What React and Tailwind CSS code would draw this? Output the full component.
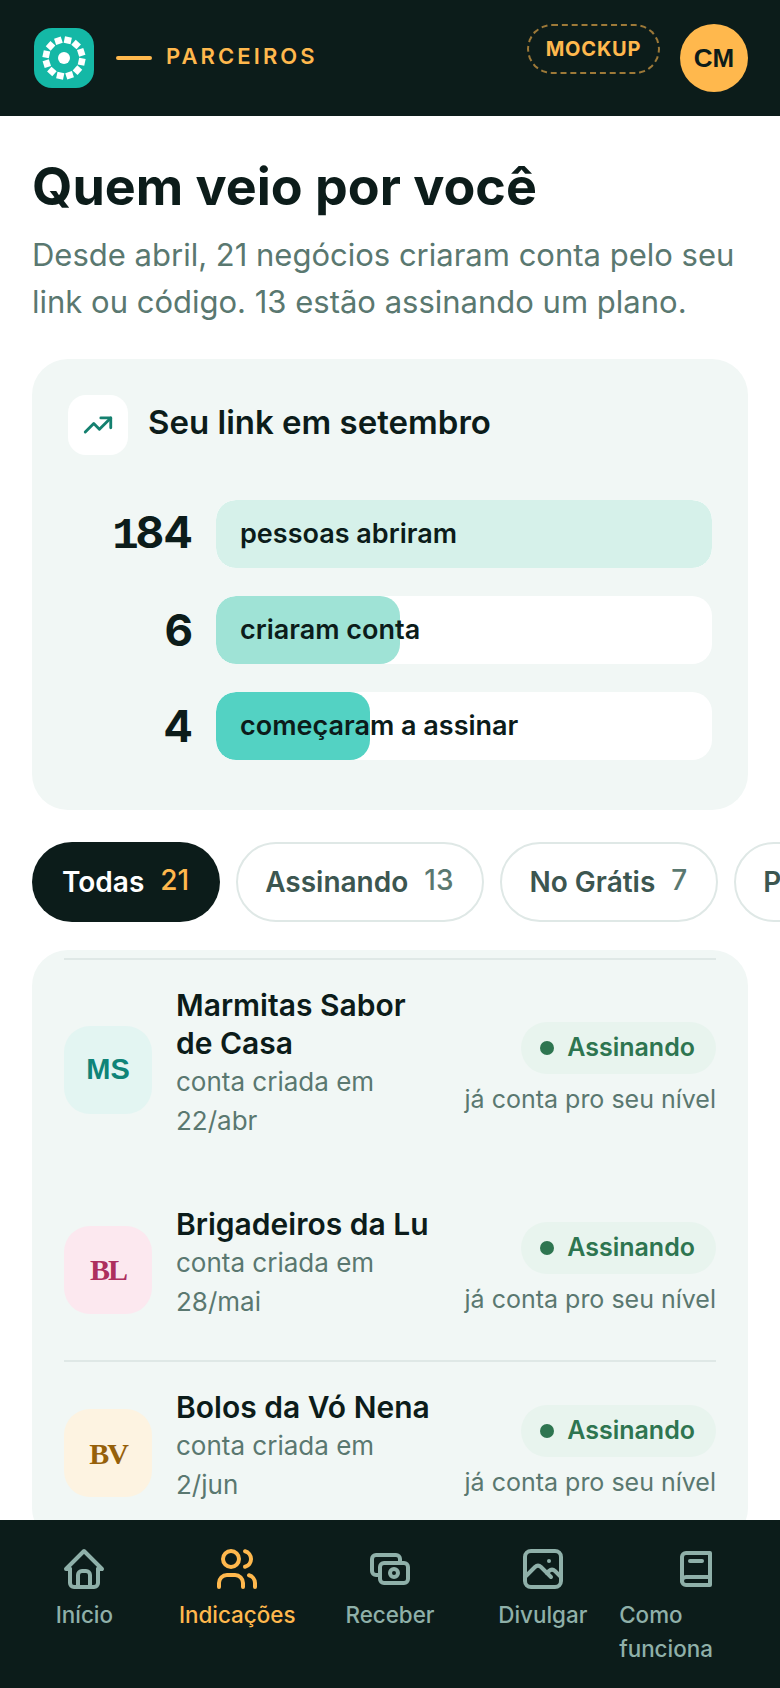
import { TbHome, TbUsers, TbCash, TbPhoto, TbBook2, TbTrendingUp } from "react-icons/tb";

const sans = "font-['Inter',sans-serif]";

function Logo() {
  const segs = Array.from({ length: 12 }, (_, i) => i * 30 + 12);
  return (
    <svg width="60" height="60" viewBox="0 0 60 60" className="shrink-0">
      <rect width="60" height="60" rx="18" fill="#14b8a6" />
      <circle cx="30" cy="30" r="6" fill="#fff" />
      {segs.map((a) => (
        <rect key={a} x="26.5" y="8.6" width="7" height="6.6" fill="#fff" transform={`rotate(${a} 30 30)`} />
      ))}
    </svg>
  );
}

function Bar({ value, lead, label, width, fill }) {
  return (
    <div className="flex items-center gap-6">
      <div className="w-[124px] text-right text-[44px] font-bold leading-none tracking-[-1px] text-[#0c1c1a]">
        {lead && <span className="font-['Liberation_Mono',monospace] tracking-[-3px]">{lead}</span>}
        {value}
      </div>
      <div className="relative h-[68px] flex-1 overflow-hidden rounded-[20px] bg-white">
        <div className="h-full rounded-[20px]" style={{ width, backgroundColor: fill }} />
        <span className="absolute inset-y-0 left-6 flex items-center text-[27px] font-semibold text-[#0c1c1a]">{label}</span>
      </div>
    </div>
  );
}

function Pill({ label, n, active }) {
  return (
    <div className={`flex h-[80px] shrink-0 items-center gap-4 rounded-full text-[28px] font-semibold ${active ? "bg-[#0c1c1a] pl-[30px] pr-[31px] text-white" : "border-2 border-[#dfe8e6] bg-white pl-[27px] pr-[29px] text-[#3c5650]"}`}>
      <span>{label}</span>
      <span className={`-translate-y-0.5 text-[28px] font-medium ${active ? "text-[#ffb84d]" : "text-[#5a7870]"}`}>{n}</span>
    </div>
  );
}

function Row({ initials, bg, fg, mono, name, date, border, cls }) {
  return (
    <div className={`flex items-center gap-6 ${border ? "border-t-2 border-[#dfe8e6]" : ""} ${cls}`}>
      <div className={`flex h-[88px] w-[88px] shrink-0 items-center justify-center rounded-[26px] font-bold ${mono}`} style={{ backgroundColor: bg, color: fg }}>
        {initials}
      </div>
      <div className="w-[264px] shrink-0 pb-[14px]">
        <div className="text-[30px] font-semibold leading-[38px] text-[#0c1c1a]">{name}</div>
        <div className="text-[26px] leading-[39px] text-[#5a7870]">conta criada em {date}</div>
      </div>
      <div className="flex flex-1 flex-col items-end gap-1.5">
        <div className="flex h-[52px] items-center gap-[13px] rounded-full bg-[#e8f4ee] pl-[19px] pr-[21px] text-[25px] font-semibold text-[#2e7550]">
          <span className="h-3.5 w-3.5 rounded-full bg-[#2e7550]" />
          Assinando
        </div>
        <div className="whitespace-nowrap text-[25px] leading-[38px] text-[#5a7870]">já conta pro seu nível</div>
      </div>
    </div>
  );
}

function NavItem({ icon: Icon, label, active }) {
  return (
    <div className={`flex flex-col items-center gap-[5px] ${active ? "text-[#ffb84d]" : "text-[#8fb0a9]"}`}>
      <Icon size={48} />
      <span className="text-[22.4px] font-medium leading-[34px]">{label}</span>
    </div>
  );
}

export default function App() {
  return (
    <div className={`relative flex h-[1688px] w-[780px] flex-col overflow-hidden bg-white ${sans}`}>
      <header className="flex h-[116px] shrink-0 items-center bg-[#0c1c1a] pl-[34px] pr-8">
        <Logo />
        <span className="ml-[22px] h-1 w-9 rounded-full bg-[#ffb84d]" />
        <span className="ml-[14px] -translate-y-0.5 text-[22px] font-semibold tracking-[0.14em] text-[#ffb84d]">PARCEIROS</span>
        <div className="ml-auto flex items-start gap-5">
          <div className="flex h-[50px] w-[133px] items-center justify-center rounded-full border-2 border-dashed border-[#ffb84d]/60 text-[20px] font-bold tracking-[0.04em] text-[#ffb84d]">MOCKUP</div>
          <div className="flex h-[68px] w-[68px] items-center justify-center rounded-full bg-[#ffb84d] font-['Liberation_Sans',sans-serif] text-[26px] font-bold text-[#0c1c1a]">CM</div>
        </div>
      </header>

      <main className="min-h-0 flex-1 overflow-hidden">
        <div className="px-8 pt-[37px]">
          <h1 className="text-[52px] font-bold leading-[68px] text-[#0c1c1a]">Quem veio por você</h1>
          <p className="mt-[10px] text-[31px] leading-[47px] text-[#5a7870]">Desde abril, 21 negócios criaram conta pelo seu link ou código. 13 estão assinando um plano.</p>
        </div>

        <section className="mx-8 mt-[34px] rounded-[36px] bg-[#f1f7f5] px-9 pb-[50px] pt-9">
          <div className="flex items-center gap-5">
            <div className="flex h-[60px] w-[60px] items-center justify-center rounded-[18px] bg-white text-[#14806f]">
              <TbTrendingUp size={34} />
            </div>
            <div className="-translate-y-0.5 text-[33px] font-semibold text-[#0c1c1a]">Seu link em setembro</div>
          </div>
          <div className="mt-[45px] flex flex-col gap-7">
            <Bar lead="1" value="84" label="pessoas abriram" width="100%" fill="#d6f1ea" />
            <Bar value="6" label="criaram conta" width="37.1%" fill="#9fe3d6" />
            <Bar value="4" label="começaram a assinar" width="31%" fill="#53d2c3" />
          </div>
        </section>

        <div className="mt-8 flex gap-4 pl-8">
          <Pill label="Todas" n="21" active />
          <Pill label="Assinando" n="13" />
          <Pill label="No Grátis" n="7" />
          <Pill label="Pendentes" n="1" />
        </div>

        <section className="mx-8 mt-7 rounded-[36px] bg-[#f1f7f5] px-8 pt-2">
          <Row border cls="h-[221px]" initials="MS" bg="#e3f5f2" fg="#0f8478" mono="font-['Liberation_Sans',sans-serif] text-[29px]" name="Marmitas Sabor de Casa" date="22/abr" />
          <Row cls="h-[181px]" initials="BL" bg="#fce8ef" fg="#ad2f5e" mono="font-['Liberation_Serif',serif] text-[30px] tracking-[-2px]" name="Brigadeiros da Lu" date="28/mai" />
          <Row border cls="h-[184px]" initials="BV" bg="#fdf3e1" fg="#96600a" mono="font-['Liberation_Serif',serif] text-[30px] tracking-[-2px]" name="Bolos da Vó Nena" date="2/jun" />
        </section>
      </main>

      <nav className="grid h-[168px] shrink-0 grid-cols-5 bg-[#0c1c1a] px-2 pt-[25px]">
        <NavItem icon={TbHome} label="Início" />
        <NavItem icon={TbUsers} label="Indicações" active />
        <NavItem icon={TbCash} label="Receber" />
        <NavItem icon={TbPhoto} label="Divulgar" />
        <NavItem icon={TbBook2} label="Como funciona" />
      </nav>
    </div>
  );
}
